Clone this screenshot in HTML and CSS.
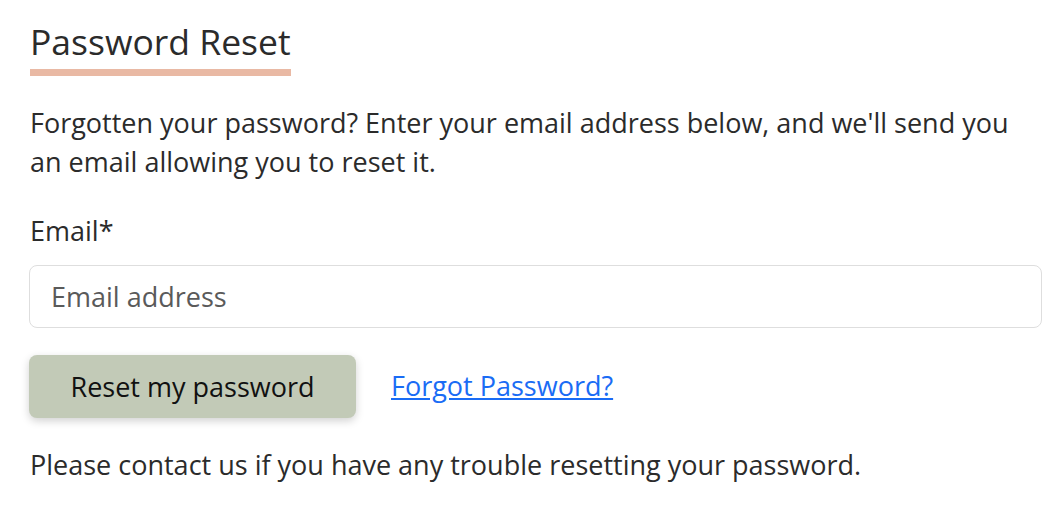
FILE: index.html
```html
<!DOCTYPE html>
<html lang="en">
<head>
<meta charset="utf-8">
<title>Password Reset</title>
<link rel="stylesheet" href="styles.css">
</head>
<body>
<main class="page">
  <h1 class="title">Password Reset</h1>
  <p class="intro">Forgotten your password? Enter your email address below, and we'll send you an email allowing you to reset it.</p>
  <form class="form">
    <label class="label" for="email">Email*</label>
    <input class="input" id="email" type="email" placeholder="Email address">
    <div class="actions">
      <button class="btn" type="button">Reset my password</button>
      <a class="link" href="#">Forgot Password?</a>
    </div>
  </form>
  <p class="note">Please contact us if you have any trouble resetting your password.</p>
</main>
</body>
</html>
```

FILE: styles.css
```css
* { box-sizing: border-box; }
html, body { margin: 0; background: #fff; }
body {
  font-family: "Open Sans", "Noto Sans", sans-serif;
  color: #2b2b2b;
  font-size: 27px;
  line-height: 39px;
}
.page {
  padding: 17px 16px 0 30px;
}
.title {
  display: inline-block;
  margin: 0;
  font-size: 35.5px;
  font-weight: 400;
  line-height: 48px;
  color: #2b2b2b;
  padding-bottom: 4px;
  border-bottom: 7px solid #e9b9a4;
}
.intro {
  margin: 27px 0 0;
}
.form {
  display: flex;
  flex-direction: column;
  margin-top: 32px;
}
.label {
  display: block;
  line-height: 36px;
}
.input {
  margin-top: 16px;
  margin-left: -1px;
  width: 1013px;
  height: 63px;
  border: 1px solid #dedede;
  border-radius: 8px;
  padding: 0 21px;
  font: inherit;
  color: #2b2b2b;
}
.input::placeholder { color: #5a5a5a; }
.actions {
  display: flex;
  align-items: center;
  gap: 35px;
  margin-top: 27px;
}
.btn {
  margin-left: -1px;
  width: 327px;
  height: 63px;
  border: none;
  border-radius: 8px;
  background: #c2cab7;
  font: inherit;
  color: #111;
  box-shadow: 0 3px 8px rgba(0,0,0,0.18);
}
.link {
  color: #1a6cf5;
  text-decoration: underline;
  margin-top: -2px;
}
.note {
  margin: 27px 0 0;
}
```
